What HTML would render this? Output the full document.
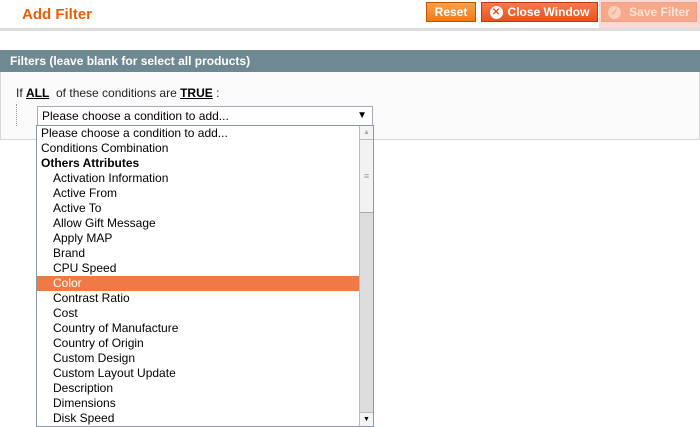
<!DOCTYPE html>
<html><head><style>
*{margin:0;padding:0;box-sizing:border-box}
body{width:700px;height:427px;background:#fff;font-family:"Liberation Sans",Arial,sans-serif;position:relative;overflow:hidden}
.title{position:absolute;left:22px;top:6px;font-size:15px;font-weight:bold;color:#eb5e00}
.line{position:absolute;left:0;top:28px;width:700px;height:3px;background:#dcdcdc}
.btn{position:absolute;top:2px;height:20px;border:1px solid #bf5400;background:linear-gradient(#f8a24b,#ef7a19);color:#fff;font-size:12px;font-weight:bold;line-height:18px;display:flex;align-items:center;justify-content:center}
.ic{display:inline-block;width:13px;height:13px;border-radius:50%;text-align:center;font-size:9px;line-height:13px;margin-right:5px}
.hdr{position:absolute;left:0;top:50px;width:700px;height:22px;background:#6f8992;color:#fff;font-size:12px;font-weight:bold;line-height:22px;padding-left:10px}
.box{position:absolute;left:0;top:72px;width:700px;height:68px;background:#fafafa;border:1px solid #d6d6d6;border-top:none}
.cond{position:absolute;left:16px;top:86px;font-size:12px;color:#222}
.cond b{text-decoration:underline;color:#000}
.sel{position:absolute;left:37px;top:106px;width:336px;height:20px;border:1px solid #aab;background:#fff;font-size:12px;line-height:18px;padding-left:4px}
.list{position:absolute;left:36px;top:125px;width:338px;height:302px;border:1px solid #8a99a8;background:#fff;font-size:12px}
.it{height:15px;line-height:15px;padding-left:4px;color:#000;white-space:nowrap}
.in{padding-left:16px}
.hl{background:#f07a45;color:#fff}
.sb{position:absolute;right:0;top:0;width:14px;height:300px;background:#dcdcdc;border-left:1px solid #bbb}
</style></head><body>
<div class="title">Add Filter</div>
<div class="line"></div>
<div class="btn" style="left:426px;width:50px">Reset</div>
<div class="btn" style="left:481px;width:117px;background:linear-gradient(#f47b4a,#e8531e);border-color:#b83c0e"><span class="ic" style="background:#fff;color:#e8531e;font-size:10px">✕</span>Close Window</div>
<div style="position:absolute;left:599px;top:0;width:101px;height:28px;background:#fbd8d4"></div>
<div class="btn" style="left:601px;width:96px;background:#f6a88a;border-color:#f2a08a;color:#fde3d6"><span class="ic" style="background:#fcd0bc;color:#f6a88a;margin-right:8px">✓</span>Save Filter</div>
<div class="hdr">Filters (leave blank for select all products)</div>
<div class="box"></div>
<div class="cond">If <b>ALL</b>&nbsp; of these conditions are <b>TRUE</b> :</div>
<div style="position:absolute;left:16px;top:104px;height:22px;border-left:1px dotted #999"></div>
<div class="sel">Please choose a condition to add...<span style="position:absolute;right:5px;top:0;font-size:10px">▼</span></div>
<div class="list">
<div class="it">Please choose a condition to add...</div>
<div class="it">Conditions Combination</div>
<div class="it"><b>Others Attributes</b></div>
<div class="it in">Activation Information</div>
<div class="it in">Active From</div>
<div class="it in">Active To</div>
<div class="it in">Allow Gift Message</div>
<div class="it in">Apply MAP</div>
<div class="it in">Brand</div>
<div class="it in">CPU Speed</div>
<div class="it in hl">Color</div>
<div class="it in">Contrast Ratio</div>
<div class="it in">Cost</div>
<div class="it in">Country of Manufacture</div>
<div class="it in">Country of Origin</div>
<div class="it in">Custom Design</div>
<div class="it in">Custom Layout Update</div>
<div class="it in">Description</div>
<div class="it in">Dimensions</div>
<div class="it in">Disk Speed</div>
<div class="sb">
<div style="height:14px;background:#f4f4f4;border-bottom:1px solid #bbb;font-size:7px;color:#aaa;text-align:center;line-height:14px">▲</div>
<div style="height:73px;background:#f2f2f2;border-bottom:1px solid #aaa;text-align:center;color:#999;font-size:9px;line-height:73px">≡</div>
<div style="position:absolute;bottom:0;left:0;width:13px;height:14px;background:#f4f4f4;border-top:1px solid #bbb;font-size:7px;text-align:center;line-height:14px">▼</div>
</div>
</div>
</body></html>
